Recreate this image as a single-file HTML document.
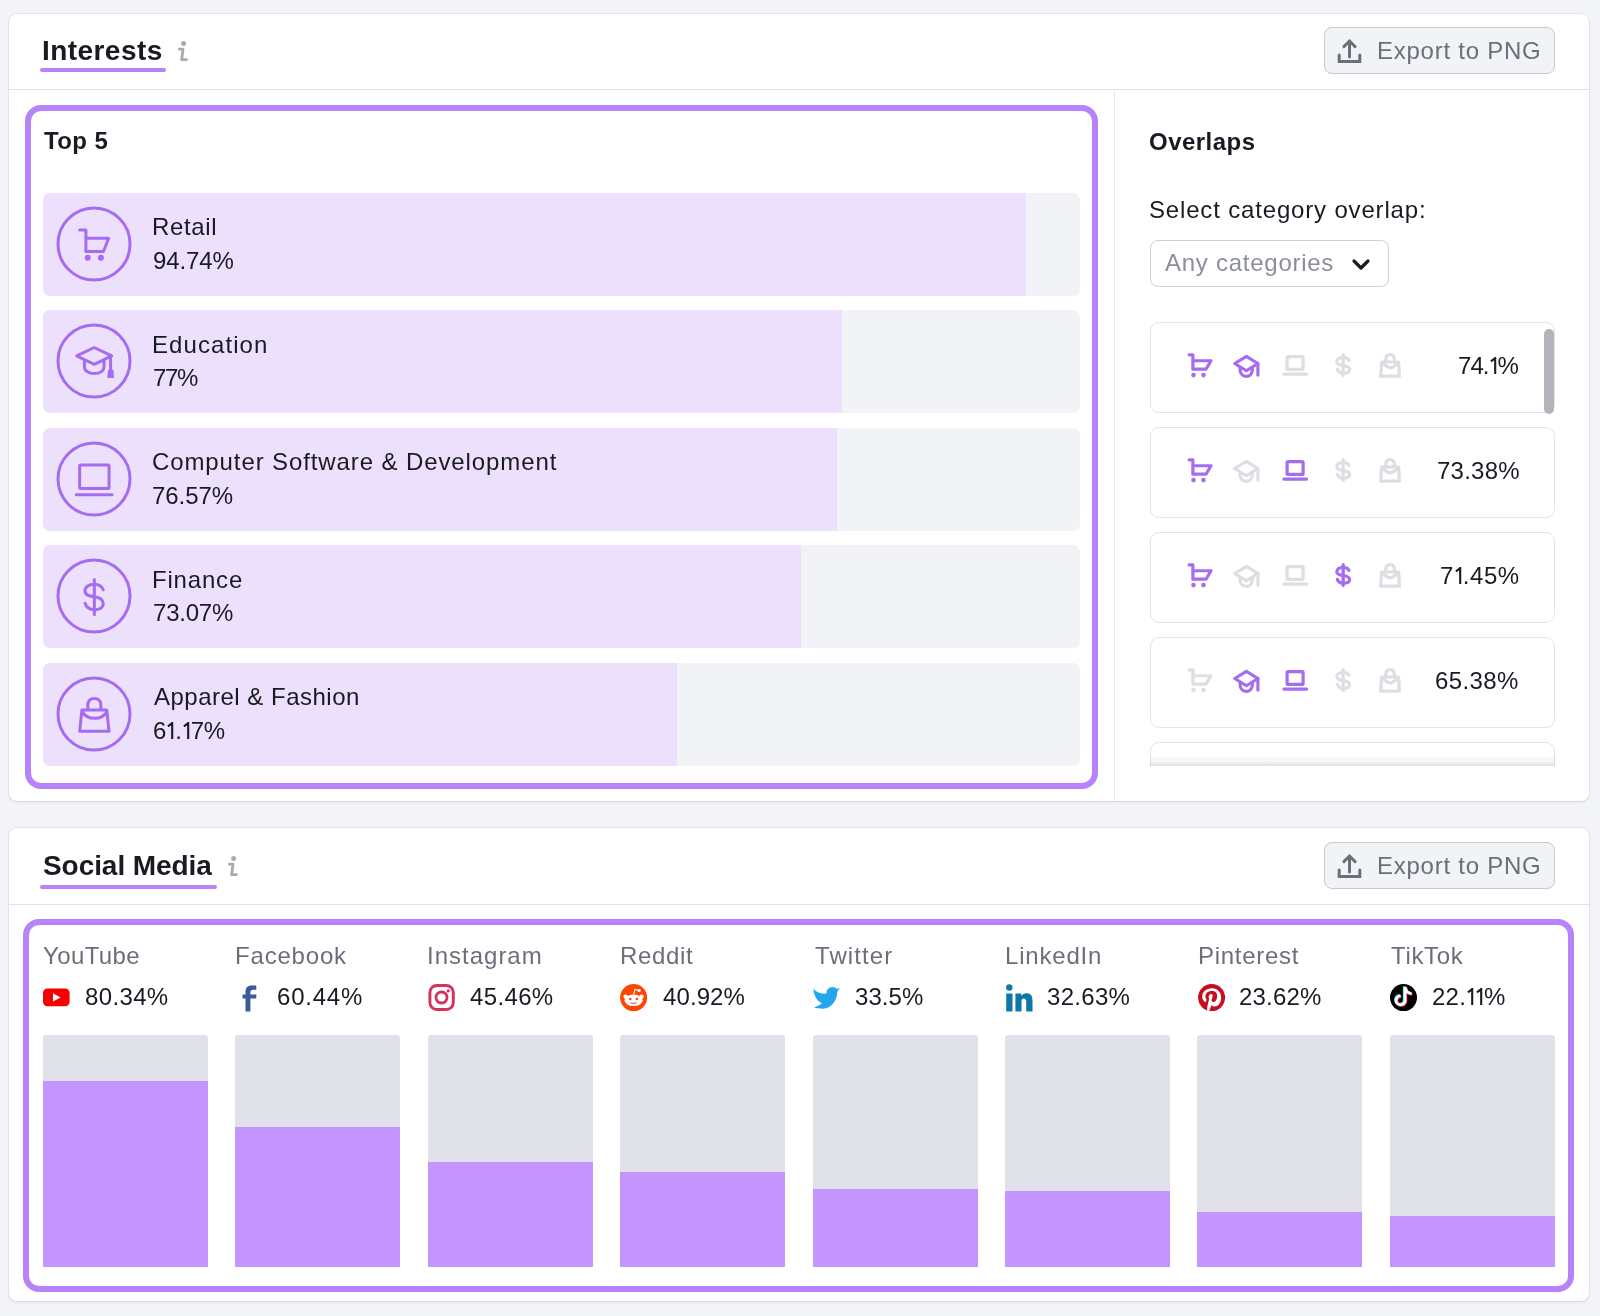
<!DOCTYPE html>
<html><head><meta charset="utf-8"><style>
html,body{margin:0;padding:0;}
body{width:1600px;height:1316px;background:#f3f4f8;position:relative;overflow:hidden;font-family:"Liberation Sans",sans-serif;}
.t{position:absolute;white-space:nowrap;line-height:1;will-change:transform;}
</style></head><body>
<div style="position:absolute;left:9px;top:14px;width:1580px;height:787px;background:#fff;border-radius:8px;box-shadow:0 0 0 1px rgba(25,27,35,0.05),0 1px 3px 0 rgba(25,27,35,0.10);"></div>
<div class="t" style="left:42.30px;top:36.60px;font-size:28px;font-weight:700;color:#191b23;letter-spacing:0.439px;">Interests</div>
<div style="position:absolute;left:40px;top:68px;width:126px;height:4px;border-radius:2px;background:#b782fa;"></div>
<svg style="position:absolute;left:176.40px;top:39.00px" width="14" height="24" viewBox="-2 -2 14 24"><circle cx="5.6" cy="2.5" r="2.5" fill="#a6abb0"/><path d="M1.4 8.2 H5 L3.6 18.6 H8.4" fill="none" stroke="#a6abb0" stroke-width="2.8" stroke-linecap="round" stroke-linejoin="round"/></svg>
<div style="position:absolute;left:1324px;top:27.3px;width:229px;height:45px;border:1px solid #c7c9cf;border-radius:8px;background:#f2f3f6;"></div>
<svg style="position:absolute;left:1336px;top:38px" width="28" height="28" viewBox="0 0 28 28"><path d="M3.2 17.1 V23.6 H23.8 V17.1" fill="none" stroke="#6c6e79" stroke-width="3" stroke-linecap="round" stroke-linejoin="miter"/><path d="M13.5 18.9 V4" fill="none" stroke="#6c6e79" stroke-width="3" stroke-linecap="round"/><path d="M7.9 8.6 L13.5 3 L19.1 8.6" fill="none" stroke="#6c6e79" stroke-width="3" stroke-linecap="round" stroke-linejoin="miter"/></svg>
<div class="t" style="left:1377.00px;top:38.90px;font-size:24px;font-weight:400;color:#6c6e79;letter-spacing:0.75px;">Export to PNG</div>
<div style="position:absolute;left:9px;top:89px;width:1580px;height:1px;background:#e0e1e9;"></div>
<div style="position:absolute;left:1114px;top:90px;width:1px;height:711px;background:#e6e7eb;"></div>
<div style="position:absolute;left:25px;top:105px;width:1061px;height:672px;border:6px solid #b782fa;border-radius:16px;"></div>
<div class="t" style="left:43.75px;top:129.20px;font-size:24px;font-weight:700;color:#191b23;letter-spacing:0.386px;">Top 5</div>
<div style="position:absolute;left:42.5px;top:193px;width:1037.5px;height:103px;border-radius:7px;background:#f2f3f7;overflow:hidden;"><div style="position:absolute;left:0;top:0;bottom:0;width:983.0px;background:#ede0fd;"></div></div>
<svg style="position:absolute;left:53.75px;top:204.3px" width="80" height="80" viewBox="-40 -40 80 80"><circle cx="0" cy="0" r="36" fill="none" stroke="#a56cf2" stroke-width="3"/><g stroke="#a56cf2" fill="#a56cf2" stroke-width="3"><path d="M-14.4 -13.9 H-8.1 V7.5 H9.4 L14.7 -5.7 H-8.1" fill="none" stroke-linecap="round" stroke-linejoin="round"/><circle cx="-6.3" cy="13.8" r="3" stroke="none"/><circle cx="6.9" cy="13.8" r="3" stroke="none"/></g></svg>
<div class="t" style="left:151.90px;top:215.00px;font-size:24px;font-weight:400;color:#191b23;letter-spacing:0.66px;">Retail</div>
<div class="t" style="left:152.90px;top:248.50px;font-size:24px;font-weight:400;color:#191b23;letter-spacing:-0.1px;">94.74%</div>
<div style="position:absolute;left:42.5px;top:310px;width:1037.5px;height:103px;border-radius:7px;background:#f2f3f7;overflow:hidden;"><div style="position:absolute;left:0;top:0;bottom:0;width:799.0px;background:#ede0fd;"></div></div>
<svg style="position:absolute;left:53.75px;top:321.3px" width="80" height="80" viewBox="-40 -40 80 80"><circle cx="0" cy="0" r="36" fill="none" stroke="#a56cf2" stroke-width="3"/><g stroke="#a56cf2" fill="#a56cf2" stroke-width="3"><path d="M-9.6 -1 V5.5 C-9.6 10 -5 12.5 0.3 12.5 C5.6 12.5 10 10 10 5.5 V-1" fill="none"/><path d="M0.3 -13.5 L-17.3 -5.2 L0.3 3.3 L17.7 -5.2 Z" fill="none" stroke-linejoin="round"/><path d="M16.6 -5.2 V10" fill="none"/><path d="M14 8.7 H19.4 L20.1 16.9 H13.3 Z" stroke="none"/></g></svg>
<div class="t" style="left:151.80px;top:332.50px;font-size:24px;font-weight:400;color:#191b23;letter-spacing:1.075px;">Education</div>
<div class="t" style="left:153.20px;top:366.00px;font-size:24px;font-weight:400;color:#191b23;letter-spacing:-1.3px;">77%</div>
<div style="position:absolute;left:42.5px;top:428px;width:1037.5px;height:103px;border-radius:7px;background:#f2f3f7;overflow:hidden;"><div style="position:absolute;left:0;top:0;bottom:0;width:794.5px;background:#ede0fd;"></div></div>
<svg style="position:absolute;left:53.75px;top:439.3px" width="80" height="80" viewBox="-40 -40 80 80"><circle cx="0" cy="0" r="36" fill="none" stroke="#a56cf2" stroke-width="3"/><g stroke="#a56cf2" fill="#a56cf2" stroke-width="3"><rect x="-14.35" y="-14.05" width="29.4" height="23.5" rx="1" fill="none"/><path d="M-17.75 15.75 H18.05" fill="none" stroke-linecap="round"/></g></svg>
<div class="t" style="left:152.20px;top:450.00px;font-size:24px;font-weight:400;color:#191b23;letter-spacing:0.894px;">Computer Software &amp; Development</div>
<div class="t" style="left:152.20px;top:483.50px;font-size:24px;font-weight:400;color:#191b23;letter-spacing:-0.06px;">76.57%</div>
<div style="position:absolute;left:42.5px;top:545px;width:1037.5px;height:103px;border-radius:7px;background:#f2f3f7;overflow:hidden;"><div style="position:absolute;left:0;top:0;bottom:0;width:758.2px;background:#ede0fd;"></div></div>
<svg style="position:absolute;left:53.75px;top:556.3px" width="80" height="80" viewBox="-40 -40 80 80"><circle cx="0" cy="0" r="36" fill="none" stroke="#a56cf2" stroke-width="3"/><g stroke="#a56cf2" fill="#a56cf2" stroke-width="3"><path d="M9.25 -6.25 C8 -9.8 5 -11.85 0.3 -11.85 C-5 -11.85 -9.05 -9 -9.05 -5 C-9.05 -1 -5 0 0.3 0.75 C5.5 1.5 9.25 3.3 9.25 7.55 C9.25 11.6 5.5 13.75 0.3 13.75 C-4.5 13.75 -7.8 11 -8.95 7.25" fill="none" stroke-linecap="round"/><path d="M0.35 -16.5 V18.5" fill="none" stroke-linecap="round"/></g></svg>
<div class="t" style="left:151.70px;top:567.50px;font-size:24px;font-weight:400;color:#191b23;letter-spacing:0.816px;">Finance</div>
<div class="t" style="left:152.70px;top:601.00px;font-size:24px;font-weight:400;color:#191b23;letter-spacing:-0.22px;">73.07%</div>
<div style="position:absolute;left:42.5px;top:663px;width:1037.5px;height:103px;border-radius:7px;background:#f2f3f7;overflow:hidden;"><div style="position:absolute;left:0;top:0;bottom:0;width:634.8px;background:#ede0fd;"></div></div>
<svg style="position:absolute;left:53.75px;top:674.3px" width="80" height="80" viewBox="-40 -40 80 80"><circle cx="0" cy="0" r="36" fill="none" stroke="#a56cf2" stroke-width="3"/><g stroke="#a56cf2" fill="#a56cf2" stroke-width="3"><path d="M-6.15 -4 V-9 C-6.15 -13.2 -3.5 -15.5 0.35 -15.5 C4.2 -15.5 6.85 -13.2 6.85 -9 V-4" fill="none"/><path d="M-12.05 -4 H12.75 L15.05 17.3 H-14.35 Z" fill="none" stroke-linejoin="round"/><path d="M-11.95 -2.6 C-9 2.5 -4.5 4.3 0.6 4.3 C5.7 4.3 10.2 2.5 13.15 -2.6" fill="none"/></g></svg>
<div class="t" style="left:153.70px;top:685.00px;font-size:24px;font-weight:400;color:#191b23;letter-spacing:0.494px;">Apparel &amp; Fashion</div>
<div class="t" style="left:152.70px;top:718.50px;font-size:24px;font-weight:400;color:#191b23;letter-spacing:-0.17px;">6<svg width="9" height="17.3" viewBox="0 0 9 17.3" style="vertical-align:baseline"><path d="M6.2 0 V17.3 M6.6 0.9 L1.9 4.4" stroke="currentColor" stroke-width="2.1" fill="none"/></svg>.<svg width="9" height="17.3" viewBox="0 0 9 17.3" style="vertical-align:baseline"><path d="M6.2 0 V17.3 M6.6 0.9 L1.9 4.4" stroke="currentColor" stroke-width="2.1" fill="none"/></svg>7%</div>
<div class="t" style="left:1149.30px;top:130.20px;font-size:24px;font-weight:700;color:#191b23;letter-spacing:0.471px;">Overlaps</div>
<div class="t" style="left:1149.30px;top:197.60px;font-size:24px;font-weight:400;color:#191b23;letter-spacing:0.831px;">Select category overlap:</div>
<div style="position:absolute;left:1150px;top:239.7px;width:237px;height:45px;border:1px solid #cdd0d6;border-radius:8px;background:#fff;"></div>
<div class="t" style="left:1165.30px;top:251.00px;font-size:24px;font-weight:400;color:#8b8f9c;letter-spacing:0.738px;">Any categories</div>
<svg style="position:absolute;left:1350px;top:256px" width="22" height="18" viewBox="0 0 22 18"><path d="M4 5 L11 12 L18 5" fill="none" stroke="#191b23" stroke-width="3.2" stroke-linecap="round" stroke-linejoin="round"/></svg>
<div style="position:absolute;left:1140px;top:300px;width:440px;height:466px;overflow:hidden;">
<div style="position:absolute;left:10px;top:22px;width:403px;height:88.5px;border:1px solid #e3e4e9;border-radius:9px;background:#fff;"></div>
<svg style="position:absolute;left:39.60px;top:45.00px" width="40" height="40" viewBox="-20.0 -20.0 40.0 40.0"><g stroke="#a56cf2" fill="#a56cf2" stroke-width="3.2"><path d="M-10.85 -10.2 H-7.1 V4.2 H6 L11 -4.25 H-7.1" fill="none" stroke-linecap="round" stroke-linejoin="round"/><circle cx="-6.5" cy="10.1" r="2.3" stroke="none"/><circle cx="3.5" cy="10.1" r="2.3" stroke="none"/></g></svg>
<svg style="position:absolute;left:87.20px;top:45.00px" width="40" height="40" viewBox="-20.0 -20.0 40.0 40.0"><g stroke="#a56cf2" fill="#a56cf2" stroke-width="3.2"><path d="M-6.9 1 V5 C-6.9 9.5 -3.5 11.4 -0.6 11.4 C2.3 11.4 5.3 9.5 5.3 5 V1" fill="none"/><path d="M-0.6 -8.6 L-12.2 -1.5 L-0.6 5.75 L10.9 -1.5 Z" fill="none" stroke-linejoin="round"/><path d="M10.9 -1.5 V10.1" fill="none" stroke-linecap="round"/></g></svg>
<svg style="position:absolute;left:134.60px;top:45.00px" width="40" height="40" viewBox="-20.0 -20.0 40.0 40.0"><g stroke="#dddde4" fill="#dddde4" stroke-width="3.2"><rect x="-7.9" y="-8.3" width="16" height="12.7" rx="1" fill="none"/><path d="M-11.1 9.1 H11.6" fill="none" stroke-linecap="round"/></g></svg>
<svg style="position:absolute;left:182.60px;top:45.00px" width="40" height="40" viewBox="-20.0 -20.0 40.0 40.0"><g stroke="#dddde4" fill="#dddde4" stroke-width="3.2"><path d="M6 -4.6 C5 -6.6 3 -7.7 0.2 -7.7 C-3.5 -7.7 -6.2 -5.8 -6.2 -3.3 C-6.2 -0.7 -3.6 0 0.2 0.5 C3.8 1 6.6 2 6.6 4.4 C6.6 7 3.8 8.2 0.2 8.2 C-2.8 8.2 -4.8 7 -5.6 4.3" fill="none" stroke-linecap="round"/><path d="M0.2 -10.5 V10.5" fill="none" stroke-linecap="round"/></g></svg>
<svg style="position:absolute;left:229.80px;top:45.00px" width="40" height="40" viewBox="-20.0 -20.0 40.0 40.0"><g stroke="#dddde4" fill="#dddde4" stroke-width="3.2"><path d="M-4.2 -3 V-6 C-4.2 -9 -2.2 -10.5 0.05 -10.5 C2.3 -10.5 4.3 -9 4.3 -6 V-3" fill="none"/><path d="M-8.4 -3 H8.6 L9.4 11.2 H-9.3 Z" fill="none" stroke-linejoin="round"/><path d="M-7 -2.2 Q0.2 7.8 7.4 -2.2" fill="none"/></g></svg>
<div class="t" style="left:317.60px;top:54.40px;font-size:24px;font-weight:400;color:#191b23;letter-spacing:-0.95px;">74.<svg width="9" height="17.3" viewBox="0 0 9 17.3" style="vertical-align:baseline"><path d="M6.2 0 V17.3 M6.6 0.9 L1.9 4.4" stroke="currentColor" stroke-width="2.1" fill="none"/></svg>%</div>
<div style="position:absolute;left:10px;top:127px;width:403px;height:88.5px;border:1px solid #e3e4e9;border-radius:9px;background:#fff;"></div>
<svg style="position:absolute;left:39.60px;top:150.00px" width="40" height="40" viewBox="-20.0 -20.0 40.0 40.0"><g stroke="#a56cf2" fill="#a56cf2" stroke-width="3.2"><path d="M-10.85 -10.2 H-7.1 V4.2 H6 L11 -4.25 H-7.1" fill="none" stroke-linecap="round" stroke-linejoin="round"/><circle cx="-6.5" cy="10.1" r="2.3" stroke="none"/><circle cx="3.5" cy="10.1" r="2.3" stroke="none"/></g></svg>
<svg style="position:absolute;left:87.20px;top:150.00px" width="40" height="40" viewBox="-20.0 -20.0 40.0 40.0"><g stroke="#dddde4" fill="#dddde4" stroke-width="3.2"><path d="M-6.9 1 V5 C-6.9 9.5 -3.5 11.4 -0.6 11.4 C2.3 11.4 5.3 9.5 5.3 5 V1" fill="none"/><path d="M-0.6 -8.6 L-12.2 -1.5 L-0.6 5.75 L10.9 -1.5 Z" fill="none" stroke-linejoin="round"/><path d="M10.9 -1.5 V10.1" fill="none" stroke-linecap="round"/></g></svg>
<svg style="position:absolute;left:134.60px;top:150.00px" width="40" height="40" viewBox="-20.0 -20.0 40.0 40.0"><g stroke="#a56cf2" fill="#a56cf2" stroke-width="3.2"><rect x="-7.9" y="-8.3" width="16" height="12.7" rx="1" fill="none"/><path d="M-11.1 9.1 H11.6" fill="none" stroke-linecap="round"/></g></svg>
<svg style="position:absolute;left:182.60px;top:150.00px" width="40" height="40" viewBox="-20.0 -20.0 40.0 40.0"><g stroke="#dddde4" fill="#dddde4" stroke-width="3.2"><path d="M6 -4.6 C5 -6.6 3 -7.7 0.2 -7.7 C-3.5 -7.7 -6.2 -5.8 -6.2 -3.3 C-6.2 -0.7 -3.6 0 0.2 0.5 C3.8 1 6.6 2 6.6 4.4 C6.6 7 3.8 8.2 0.2 8.2 C-2.8 8.2 -4.8 7 -5.6 4.3" fill="none" stroke-linecap="round"/><path d="M0.2 -10.5 V10.5" fill="none" stroke-linecap="round"/></g></svg>
<svg style="position:absolute;left:229.80px;top:150.00px" width="40" height="40" viewBox="-20.0 -20.0 40.0 40.0"><g stroke="#dddde4" fill="#dddde4" stroke-width="3.2"><path d="M-4.2 -3 V-6 C-4.2 -9 -2.2 -10.5 0.05 -10.5 C2.3 -10.5 4.3 -9 4.3 -6 V-3" fill="none"/><path d="M-8.4 -3 H8.6 L9.4 11.2 H-9.3 Z" fill="none" stroke-linejoin="round"/><path d="M-7 -2.2 Q0.2 7.8 7.4 -2.2" fill="none"/></g></svg>
<div class="t" style="left:296.60px;top:159.40px;font-size:24px;font-weight:400;color:#191b23;letter-spacing:0.24px;">73.38%</div>
<div style="position:absolute;left:10px;top:232px;width:403px;height:88.5px;border:1px solid #e3e4e9;border-radius:9px;background:#fff;"></div>
<svg style="position:absolute;left:39.60px;top:255.00px" width="40" height="40" viewBox="-20.0 -20.0 40.0 40.0"><g stroke="#a56cf2" fill="#a56cf2" stroke-width="3.2"><path d="M-10.85 -10.2 H-7.1 V4.2 H6 L11 -4.25 H-7.1" fill="none" stroke-linecap="round" stroke-linejoin="round"/><circle cx="-6.5" cy="10.1" r="2.3" stroke="none"/><circle cx="3.5" cy="10.1" r="2.3" stroke="none"/></g></svg>
<svg style="position:absolute;left:87.20px;top:255.00px" width="40" height="40" viewBox="-20.0 -20.0 40.0 40.0"><g stroke="#dddde4" fill="#dddde4" stroke-width="3.2"><path d="M-6.9 1 V5 C-6.9 9.5 -3.5 11.4 -0.6 11.4 C2.3 11.4 5.3 9.5 5.3 5 V1" fill="none"/><path d="M-0.6 -8.6 L-12.2 -1.5 L-0.6 5.75 L10.9 -1.5 Z" fill="none" stroke-linejoin="round"/><path d="M10.9 -1.5 V10.1" fill="none" stroke-linecap="round"/></g></svg>
<svg style="position:absolute;left:134.60px;top:255.00px" width="40" height="40" viewBox="-20.0 -20.0 40.0 40.0"><g stroke="#dddde4" fill="#dddde4" stroke-width="3.2"><rect x="-7.9" y="-8.3" width="16" height="12.7" rx="1" fill="none"/><path d="M-11.1 9.1 H11.6" fill="none" stroke-linecap="round"/></g></svg>
<svg style="position:absolute;left:182.60px;top:255.00px" width="40" height="40" viewBox="-20.0 -20.0 40.0 40.0"><g stroke="#a56cf2" fill="#a56cf2" stroke-width="3.2"><path d="M6 -4.6 C5 -6.6 3 -7.7 0.2 -7.7 C-3.5 -7.7 -6.2 -5.8 -6.2 -3.3 C-6.2 -0.7 -3.6 0 0.2 0.5 C3.8 1 6.6 2 6.6 4.4 C6.6 7 3.8 8.2 0.2 8.2 C-2.8 8.2 -4.8 7 -5.6 4.3" fill="none" stroke-linecap="round"/><path d="M0.2 -10.5 V10.5" fill="none" stroke-linecap="round"/></g></svg>
<svg style="position:absolute;left:229.80px;top:255.00px" width="40" height="40" viewBox="-20.0 -20.0 40.0 40.0"><g stroke="#dddde4" fill="#dddde4" stroke-width="3.2"><path d="M-4.2 -3 V-6 C-4.2 -9 -2.2 -10.5 0.05 -10.5 C2.3 -10.5 4.3 -9 4.3 -6 V-3" fill="none"/><path d="M-8.4 -3 H8.6 L9.4 11.2 H-9.3 Z" fill="none" stroke-linejoin="round"/><path d="M-7 -2.2 Q0.2 7.8 7.4 -2.2" fill="none"/></g></svg>
<div class="t" style="left:299.50px;top:264.40px;font-size:24px;font-weight:400;color:#191b23;letter-spacing:0.5px;">7<svg width="9" height="17.3" viewBox="0 0 9 17.3" style="vertical-align:baseline"><path d="M6.2 0 V17.3 M6.6 0.9 L1.9 4.4" stroke="currentColor" stroke-width="2.1" fill="none"/></svg>.45%</div>
<div style="position:absolute;left:10px;top:337px;width:403px;height:88.5px;border:1px solid #e3e4e9;border-radius:9px;background:#fff;"></div>
<svg style="position:absolute;left:39.60px;top:360.00px" width="40" height="40" viewBox="-20.0 -20.0 40.0 40.0"><g stroke="#dddde4" fill="#dddde4" stroke-width="3.2"><path d="M-10.85 -10.2 H-7.1 V4.2 H6 L11 -4.25 H-7.1" fill="none" stroke-linecap="round" stroke-linejoin="round"/><circle cx="-6.5" cy="10.1" r="2.3" stroke="none"/><circle cx="3.5" cy="10.1" r="2.3" stroke="none"/></g></svg>
<svg style="position:absolute;left:87.20px;top:360.00px" width="40" height="40" viewBox="-20.0 -20.0 40.0 40.0"><g stroke="#a56cf2" fill="#a56cf2" stroke-width="3.2"><path d="M-6.9 1 V5 C-6.9 9.5 -3.5 11.4 -0.6 11.4 C2.3 11.4 5.3 9.5 5.3 5 V1" fill="none"/><path d="M-0.6 -8.6 L-12.2 -1.5 L-0.6 5.75 L10.9 -1.5 Z" fill="none" stroke-linejoin="round"/><path d="M10.9 -1.5 V10.1" fill="none" stroke-linecap="round"/></g></svg>
<svg style="position:absolute;left:134.60px;top:360.00px" width="40" height="40" viewBox="-20.0 -20.0 40.0 40.0"><g stroke="#a56cf2" fill="#a56cf2" stroke-width="3.2"><rect x="-7.9" y="-8.3" width="16" height="12.7" rx="1" fill="none"/><path d="M-11.1 9.1 H11.6" fill="none" stroke-linecap="round"/></g></svg>
<svg style="position:absolute;left:182.60px;top:360.00px" width="40" height="40" viewBox="-20.0 -20.0 40.0 40.0"><g stroke="#dddde4" fill="#dddde4" stroke-width="3.2"><path d="M6 -4.6 C5 -6.6 3 -7.7 0.2 -7.7 C-3.5 -7.7 -6.2 -5.8 -6.2 -3.3 C-6.2 -0.7 -3.6 0 0.2 0.5 C3.8 1 6.6 2 6.6 4.4 C6.6 7 3.8 8.2 0.2 8.2 C-2.8 8.2 -4.8 7 -5.6 4.3" fill="none" stroke-linecap="round"/><path d="M0.2 -10.5 V10.5" fill="none" stroke-linecap="round"/></g></svg>
<svg style="position:absolute;left:229.80px;top:360.00px" width="40" height="40" viewBox="-20.0 -20.0 40.0 40.0"><g stroke="#dddde4" fill="#dddde4" stroke-width="3.2"><path d="M-4.2 -3 V-6 C-4.2 -9 -2.2 -10.5 0.05 -10.5 C2.3 -10.5 4.3 -9 4.3 -6 V-3" fill="none"/><path d="M-8.4 -3 H8.6 L9.4 11.2 H-9.3 Z" fill="none" stroke-linejoin="round"/><path d="M-7 -2.2 Q0.2 7.8 7.4 -2.2" fill="none"/></g></svg>
<div class="t" style="left:295.00px;top:369.40px;font-size:24px;font-weight:400;color:#191b23;letter-spacing:0.4px;">65.38%</div>
<div style="position:absolute;left:10px;top:442px;width:403px;height:88.5px;border:1px solid #e3e4e9;border-radius:9px;background:#fff;"></div>
<div style="position:absolute;left:404px;top:28.7px;width:10px;height:85px;border-radius:5px;background:#b3b4b9;"></div>
<div style="position:absolute;left:10px;top:455px;width:405px;height:11px;background:linear-gradient(to bottom,rgba(25,27,35,0) 0%,rgba(25,27,35,0.05) 60%,rgba(25,27,35,0.13) 100%);"></div>
</div>
<div style="position:absolute;left:9px;top:828px;width:1580px;height:473px;background:#fff;border-radius:8px;box-shadow:0 0 0 1px rgba(25,27,35,0.05),0 1px 3px 0 rgba(25,27,35,0.10);"></div>
<div class="t" style="left:42.70px;top:852.10px;font-size:28px;font-weight:700;color:#191b23;letter-spacing:-0.064px;">Social Media</div>
<div style="position:absolute;left:40px;top:885px;width:177px;height:4px;border-radius:2px;background:#b782fa;"></div>
<svg style="position:absolute;left:226.40px;top:853.80px" width="14" height="24" viewBox="-2 -2 14 24"><circle cx="5.6" cy="2.5" r="2.5" fill="#a6abb0"/><path d="M1.4 8.2 H5 L3.6 18.6 H8.4" fill="none" stroke="#a6abb0" stroke-width="2.8" stroke-linecap="round" stroke-linejoin="round"/></svg>
<div style="position:absolute;left:1324px;top:841.8px;width:229px;height:45px;border:1px solid #c7c9cf;border-radius:8px;background:#f2f3f6;"></div>
<svg style="position:absolute;left:1336px;top:852.5px" width="28" height="28" viewBox="0 0 28 28"><path d="M3.2 17.1 V23.6 H23.8 V17.1" fill="none" stroke="#6c6e79" stroke-width="3" stroke-linecap="round" stroke-linejoin="miter"/><path d="M13.5 18.9 V4" fill="none" stroke="#6c6e79" stroke-width="3" stroke-linecap="round"/><path d="M7.9 8.6 L13.5 3 L19.1 8.6" fill="none" stroke="#6c6e79" stroke-width="3" stroke-linecap="round" stroke-linejoin="miter"/></svg>
<div class="t" style="left:1377.00px;top:853.50px;font-size:24px;font-weight:400;color:#6c6e79;letter-spacing:0.75px;">Export to PNG</div>
<div style="position:absolute;left:9px;top:903.5px;width:1580px;height:1px;background:#e0e1e9;"></div>
<div style="position:absolute;left:23.4px;top:919px;width:1538.6px;height:361px;border:6px solid #b782fa;border-radius:16px;"></div>
<div class="t" style="left:42.90px;top:943.70px;font-size:24px;font-weight:400;color:#6c6e79;letter-spacing:0.384px;">YouTube</div>
<svg style="position:absolute;left:43.2px;top:983.5px" width="28" height="28" viewBox="0 0 28 28"><rect x="0" y="4.5" width="26.6" height="17.8" rx="4.5" fill="#f70000"/><path d="M10 9.3 L17.5 13.4 L10 17.5 Z" fill="#fff"/></svg>
<div class="t" style="left:84.60px;top:984.50px;font-size:24px;font-weight:400;color:#191b23;letter-spacing:0.36px;">80.34%</div>
<div style="position:absolute;left:43.0px;top:1035px;width:165px;height:232px;background:#e0e1e9;border-radius:3px 3px 0 0;overflow:hidden;"><div style="position:absolute;left:0;right:0;bottom:0;height:186.4px;background:#c495fe;"></div></div>
<div class="t" style="left:234.60px;top:943.70px;font-size:24px;font-weight:400;color:#6c6e79;letter-spacing:0.815px;">Facebook</div>
<svg style="position:absolute;left:235.6px;top:983.5px" width="28" height="28" viewBox="0 0 28 28"><path d="M9.5 27.4 V14.6 H6.6 V10.4 H9.5 V7.6 C9.5 3.6 11.8 1.5 15.6 1.5 H20.3 V5.7 H17.3 C15.5 5.7 14.4 6.5 14.4 8.2 V10.4 H20.3 V14.6 H14.4 V27.4 Z" fill="#3b5a9a"/></svg>
<div class="t" style="left:276.50px;top:984.50px;font-size:24px;font-weight:400;color:#191b23;letter-spacing:0.78px;">60.44%</div>
<div style="position:absolute;left:235.4px;top:1035px;width:165px;height:232px;background:#e0e1e9;border-radius:3px 3px 0 0;overflow:hidden;"><div style="position:absolute;left:0;right:0;bottom:0;height:140.2px;background:#c495fe;"></div></div>
<div class="t" style="left:426.70px;top:943.70px;font-size:24px;font-weight:400;color:#6c6e79;letter-spacing:1.0px;">Instagram</div>
<svg style="position:absolute;left:428.0px;top:983.5px" width="28" height="28" viewBox="0 0 28 28"><rect x="1.9" y="1.5" width="23.4" height="24" rx="7" fill="none" stroke="#d6305c" stroke-width="2.9"/><circle cx="13.5" cy="13.5" r="5.5" fill="none" stroke="#d6305c" stroke-width="2.9"/><circle cx="20.2" cy="6.9" r="1.6" fill="#d6305c"/></svg>
<div class="t" style="left:469.80px;top:984.50px;font-size:24px;font-weight:400;color:#191b23;letter-spacing:0.36px;">45.46%</div>
<div style="position:absolute;left:427.8px;top:1035px;width:165px;height:232px;background:#e0e1e9;border-radius:3px 3px 0 0;overflow:hidden;"><div style="position:absolute;left:0;right:0;bottom:0;height:105.5px;background:#c495fe;"></div></div>
<div class="t" style="left:619.50px;top:943.70px;font-size:24px;font-weight:400;color:#6c6e79;letter-spacing:0.64px;">Reddit</div>
<svg style="position:absolute;left:620.4000000000001px;top:983.5px" width="28" height="28" viewBox="0 0 28 28"><circle cx="13.6" cy="13.6" r="13.5" fill="#ff4500"/><ellipse cx="13.6" cy="16.3" rx="9.1" ry="5.8" fill="#fff"/><circle cx="5.6" cy="12.6" r="2.2" fill="#fff"/><circle cx="21.6" cy="12.6" r="2.2" fill="#fff"/><path d="M13.6 10.5 L15 5.5 L19 6.5" fill="none" stroke="#fff" stroke-width="1.1"/><circle cx="19.2" cy="6.5" r="1.6" fill="#fff"/><circle cx="10.3" cy="15" r="1.3" fill="#ff4500"/><circle cx="16.9" cy="15" r="1.3" fill="#ff4500"/><path d="M10.5 18.8 Q13.6 20 16.7 18.8" fill="none" stroke="#6b4b45" stroke-width="0.8"/></svg>
<div class="t" style="left:663.30px;top:984.50px;font-size:24px;font-weight:400;color:#191b23;letter-spacing:0.1px;">40.92%</div>
<div style="position:absolute;left:620.2px;top:1035px;width:165px;height:232px;background:#e0e1e9;border-radius:3px 3px 0 0;overflow:hidden;"><div style="position:absolute;left:0;right:0;bottom:0;height:94.9px;background:#c495fe;"></div></div>
<div class="t" style="left:814.50px;top:943.70px;font-size:24px;font-weight:400;color:#6c6e79;letter-spacing:1.083px;">Twitter</div>
<svg style="position:absolute;left:805px;top:978px" width="45" height="37" viewBox="0 0 45 37"><path d="M8.4 10.7 C11.5 14.5 16.5 16 21.4 15.7 C21 12 24 9 27.5 9 C29.5 9 31 10 32 11 L34.9 9.8 L32.3 13.8 C32.5 22 26 30.7 18.3 30.7 C14.5 30.7 11 30 9 29.5 C12.5 28.5 15 27 16.9 25.3 C12 23 8.5 17 8.4 10.7 Z" fill="#22a7ee"/></svg>
<div class="t" style="left:854.70px;top:984.50px;font-size:24px;font-weight:400;color:#191b23;letter-spacing:0.05px;">33.5%</div>
<div style="position:absolute;left:812.6px;top:1035px;width:165px;height:232px;background:#e0e1e9;border-radius:3px 3px 0 0;overflow:hidden;"><div style="position:absolute;left:0;right:0;bottom:0;height:77.7px;background:#c495fe;"></div></div>
<div class="t" style="left:1004.50px;top:943.70px;font-size:24px;font-weight:400;color:#6c6e79;letter-spacing:0.815px;">LinkedIn</div>
<svg style="position:absolute;left:1005.2px;top:983.5px" width="28" height="28" viewBox="0 0 28 28"><circle cx="4.3" cy="3.5" r="3.2" fill="#0e76a8"/><rect x="1.2" y="9.6" width="6.3" height="17.9" rx="0.6" fill="#0e76a8"/><path d="M10.4 9.6 H16.3 V12 C17.3 10.4 19 9.2 21.6 9.2 C25.5 9.2 27.5 11.7 27.5 16.3 V27.5 H21.2 V17.5 C21.2 15.5 20.3 14.5 18.8 14.5 C17.3 14.5 16.5 15.5 16.5 17.5 V27.5 H10.4 Z" fill="#0e76a8"/></svg>
<div class="t" style="left:1047.30px;top:984.50px;font-size:24px;font-weight:400;color:#191b23;letter-spacing:0.3px;">32.63%</div>
<div style="position:absolute;left:1005.0px;top:1035px;width:165px;height:232px;background:#e0e1e9;border-radius:3px 3px 0 0;overflow:hidden;"><div style="position:absolute;left:0;right:0;bottom:0;height:75.7px;background:#c495fe;"></div></div>
<div class="t" style="left:1197.50px;top:943.70px;font-size:24px;font-weight:400;color:#6c6e79;letter-spacing:0.714px;">Pinterest</div>
<svg style="position:absolute;left:1197.6000000000001px;top:983.5px" width="28" height="28" viewBox="0 0 28 28"><circle cx="13.6" cy="13.6" r="13.5" fill="#c80d1e"/><path transform="translate(13.6 13.4) scale(1.1) translate(-13.6 -13.4)" d="M14 5 C8.5 5 5 8.5 5 12.5 C5 15 6.3 17 8 17.5 C8.3 17.6 8.6 17.4 8.6 17.1 L9 15.8 C9.1 15.5 9 15.3 8.8 15 C8.3 14.3 8 13.6 8 12.5 C8 9.5 10.4 7.5 13.8 7.5 C16.8 7.5 18.7 9.3 18.7 12 C18.7 15.3 17.3 17.6 15.3 17.6 C14.2 17.6 13.3 16.7 13.6 15.6 C13.9 14.3 14.6 12.8 14.6 11.8 C14.6 10.9 14.1 10.2 13.1 10.2 C11.9 10.2 10.9 11.5 10.9 13.2 C10.9 14.3 11.3 15 11.3 15 L9.8 21.5 C9.4 23.2 9.6 25.5 9.7 26.6 L10.6 26.9 C11.3 26 12.2 24.3 12.6 22.9 L13.3 20.2 C13.8 21 15.1 21.7 16.3 21.7 C20 21.7 22.3 18.2 22.3 13.6 C22.3 8.7 18.8 5 14 5 Z" fill="#fff"/></svg>
<div class="t" style="left:1239.00px;top:984.50px;font-size:24px;font-weight:400;color:#191b23;letter-spacing:0.2px;">23.62%</div>
<div style="position:absolute;left:1197.4px;top:1035px;width:165px;height:232px;background:#e0e1e9;border-radius:3px 3px 0 0;overflow:hidden;"><div style="position:absolute;left:0;right:0;bottom:0;height:54.8px;background:#c495fe;"></div></div>
<div class="t" style="left:1391.25px;top:943.70px;font-size:24px;font-weight:400;color:#6c6e79;letter-spacing:0.67px;">TikTok</div>
<svg style="position:absolute;left:1390.0px;top:983.5px" width="28" height="28" viewBox="0 0 28 28"><circle cx="13.5" cy="13.6" r="13.5" fill="#000"/><g transform="translate(-0.8,-0.6)" stroke="#25f4ee"><path d="M15.06 2.9 V16.4 A4.45 4.45 0 1 1 10.6 11.95" fill="none" stroke-width="2.8"/><path d="M15.2 3.4 C15.6 7 18 9.4 21.6 9.7" fill="none" stroke-width="2.8"/></g><g transform="translate(0.8,0.6)" stroke="#fe2c55"><path d="M15.06 2.9 V16.4 A4.45 4.45 0 1 1 10.6 11.95" fill="none" stroke-width="2.8"/><path d="M15.2 3.4 C15.6 7 18 9.4 21.6 9.7" fill="none" stroke-width="2.8"/></g><g stroke="#fff"><path d="M15.06 2.9 V16.4 A4.45 4.45 0 1 1 10.6 11.95" fill="none" stroke-width="2.8"/><path d="M15.2 3.4 C15.6 7 18 9.4 21.6 9.7" fill="none" stroke-width="2.8"/></g></svg>
<div class="t" style="left:1431.90px;top:984.50px;font-size:24px;font-weight:400;color:#191b23;letter-spacing:0.24px;">22.<svg width="9" height="17.3" viewBox="0 0 9 17.3" style="vertical-align:baseline"><path d="M6.2 0 V17.3 M6.6 0.9 L1.9 4.4" stroke="currentColor" stroke-width="2.1" fill="none"/></svg><svg width="9" height="17.3" viewBox="0 0 9 17.3" style="vertical-align:baseline"><path d="M6.2 0 V17.3 M6.6 0.9 L1.9 4.4" stroke="currentColor" stroke-width="2.1" fill="none"/></svg>%</div>
<div style="position:absolute;left:1389.8px;top:1035px;width:165px;height:232px;background:#e0e1e9;border-radius:3px 3px 0 0;overflow:hidden;"><div style="position:absolute;left:0;right:0;bottom:0;height:51.3px;background:#c495fe;"></div></div>
</body></html>
